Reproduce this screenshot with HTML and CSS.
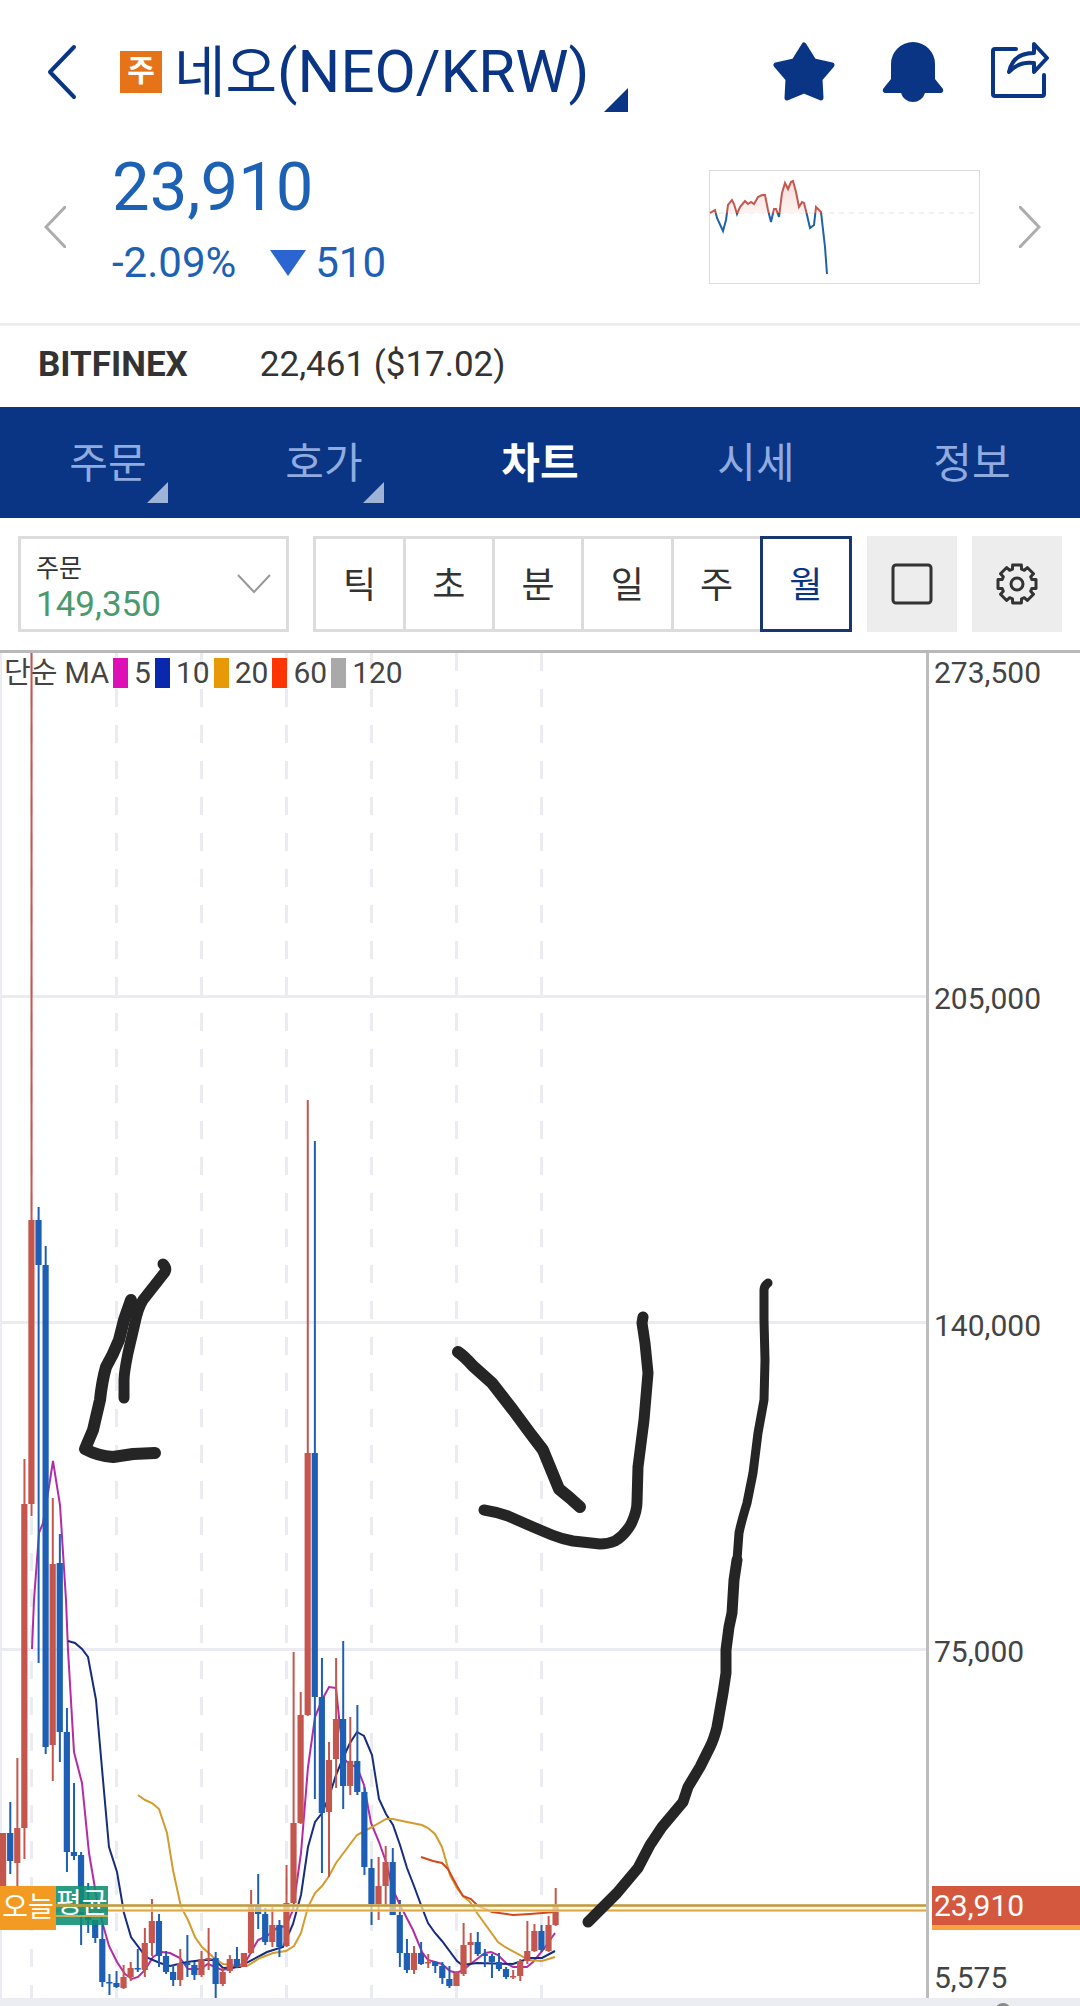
FILE: index.html
```html
<!DOCTYPE html>
<html lang="ko">
<head>
    <meta charset="UTF-8">
    <meta name="viewport" content="width=device-width, initial-scale=1.0">
    <title>네오(NEO/KRW)</title>
    <link rel="stylesheet" href="styles.css">
</head>
<body>
    <header class="header">
        <button class="icon-button" aria-label="뒤로">
            <svg width="30" height="56" viewBox="0 0 30 56"><path d="M27 3 L3 28 L27 53" fill="none" stroke="#0a3585" stroke-width="4" stroke-linecap="round" stroke-linejoin="round"/></svg>
        </button>
        <span class="badge">주</span>
        <h1 class="title"><span class="title-ko">네오</span>(NEO/KRW)</h1>
        <span class="corner corner-title"></span>
        <div class="header-icons">
            <button class="icon-button" aria-label="관심">
                <svg width="62" height="60" viewBox="0 0 62 60"><path d="M31 3 L41 19 L59 23 L47 37 L48 56 L31 49 L14 56 L15 37 L3 23 L21 19 Z" fill="#0a3585" stroke="#0a3585" stroke-width="5" stroke-linejoin="round"/></svg>
            </button>
            <button class="icon-button" aria-label="알림">
                <svg width="62" height="60" viewBox="0 0 62 60"><path d="M9 22 A22 22 0 0 1 53 22 V37 L61 47 Q62 50 59 51 H43 A12.5 12.5 0 0 1 19 51 H3 Q0 50 1 47 L9 37 Z" fill="#0a3585"/></svg>
            </button>
            <button class="icon-button" aria-label="공유">
                <svg width="58" height="60" viewBox="0 0 58 60" fill="none" stroke="#0a3585" stroke-width="4" stroke-linecap="round" stroke-linejoin="round"><path d="M25 7 H4 Q2 7 2 9 V52 Q2 54 4 54 H51 Q53 54 53 52 V33"/><path d="M43 2 L56 16 L43 30 V21 Q28 19 18 30 Q22 11 43 11 Z"/></svg>
            </button>
        </div>
    </header>

    <section class="quote">
        <button class="icon-button" aria-label="이전">
            <svg width="22" height="42" viewBox="0 0 22 42"><path d="M22 0 L2 21 L22 42" fill="none" stroke="#adadad" stroke-width="3"/></svg>
        </button>
        <div class="quote-text">
            <div class="price">23,910</div>
            <div class="change"><span>-2.09%</span><span class="down"></span><span>510</span></div>
        </div>
        <svg class="spark" width="271" height="114" viewBox="0 0 271 114">
            <defs>
                <clipPath id="above"><rect x="0" y="0" width="271" height="43"/></clipPath>
                <clipPath id="below"><rect x="0" y="43" width="271" height="71"/></clipPath>
                <linearGradient id="fade" x1="0" y1="0" x2="0" y2="1"><stop offset="0" stop-color="#f8dcd9"/><stop offset="0.5" stop-color="#fff"/></linearGradient>
            </defs>
            <rect x="0.5" y="0.5" width="270" height="113" fill="#fff" stroke="#dcdcdc"/>
            <path d="M0 43 H266" stroke="#e4e4e4" stroke-dasharray="5 5"/>
            <path id="sparkFill" clip-path="url(#above)" fill="url(#fade)"/>
            <path id="sparkUp" clip-path="url(#above)" fill="none" stroke="#c4574e" stroke-width="2"/>
            <path id="sparkDown" clip-path="url(#below)" fill="none" stroke="#1f62a8" stroke-width="2"/>
        </svg>
        <button class="icon-button" aria-label="다음">
            <svg width="22" height="42" viewBox="0 0 22 42"><path d="M0 0 L20 21 L0 42" fill="none" stroke="#adadad" stroke-width="3"/></svg>
        </button>
    </section>

    <div class="exchange">
        <strong>BITFINEX</strong>
        <span>22,461 ($17.02)</span>
    </div>

    <nav class="tabs">
        <a href="#order">주문<span class="corner corner-tab"></span></a>
        <a href="#hoga">호가<span class="corner corner-tab"></span></a>
        <a href="#chart" class="active">차트</a>
        <a href="#price">시세</a>
        <a href="#info">정보</a>
    </nav>

    <div class="toolbar">
        <div class="order-box">
            <div class="order-field">
                <label for="order">주문</label>
                <select id="order">
                    <option>149,350</option>
                </select>
            </div>
            <svg width="34" height="20" viewBox="0 0 34 20"><path d="M1 1 L17 18 L33 1" fill="none" stroke="#999" stroke-width="2"/></svg>
        </div>
        <div class="periods">
            <button>틱</button>
            <button>초</button>
            <button>분</button>
            <button>일</button>
            <button>주</button>
            <button class="active">월</button>
        </div>
        <button class="tool" aria-label="전체화면">
            <svg width="42" height="42" viewBox="0 0 42 42"><rect x="2" y="2" width="38" height="38" rx="3" fill="none" stroke="#333" stroke-width="3"/></svg>
        </button>
        <button class="tool" aria-label="설정">
            <svg width="42" height="42" viewBox="0 0 42 42" fill="none" stroke="#333" stroke-width="3" stroke-linejoin="round"><path id="gear"/><circle cx="21" cy="21" r="6"/></svg>
        </button>
    </div>

    <main class="chart" id="chart">
        <div class="plot">
            <svg class="plot-svg" viewBox="0 0 926 1345">
                <g id="grid"></g>
                <g id="averages"></g>
                <g id="candles"></g>
                <g class="ink">
                    <path stroke-width="12" d="M131 647 L124 667 L119 687 Q113 702 106 714 Q102 728 100 747 L93 777 L85 796 Q98 803 113 804 L133 801 L155 800"/>
                    <path stroke-width="11" d="M163 611 Q167 615 165 619 L143 647 Q138 655 135 670 L128 700 Q124 720 124 727 V745"/>
                    <path stroke-width="12" d="M458 699 Q464 703 473 713 L492 730 L513 757 L530 780 L543 797 L559 836 L570 845 L580 854"/>
                    <path stroke-width="11" d="M484 857 Q497 859 508 863 L533 874 L552 882 Q562 886 573 888 L600 891 Q608 891 615 888 Q622 884 627 877 Q631 872 632 869 Q637 858 637 849 L638 814 L644 767 L648 720 L645 690 L642 670 L643 664"/>
                    <path stroke-width="9" d="M768 630 Q764 633 764 637 V667 L765 707 L764 747 L758 780 L753 820 L747 850 Q741 870 739 880 L737 907 L734 927"/>
                    <path stroke-width="11" d="M737 907 L734 927 L732 960 L729 974 L726 997 V1020 L723 1040 L717 1074 Q714 1086 710 1094 L700 1114 L688 1134 L683 1149 L662 1174 L650 1192 L638 1215 L617 1240 L600 1257 L588 1269"/>
                </g>
            </svg>
            <div class="legend">
                <span class="legend-name">단순 MA</span>
                <i class="swatch ma5"></i><span>5</span>
                <i class="swatch ma10"></i><span>10</span>
                <i class="swatch ma20"></i><span>20</span>
                <i class="swatch ma60"></i><span>60</span>
                <i class="swatch ma120"></i><span>120</span>
            </div>
            <div class="tags">
                <span class="tag today">오늘</span>
                <span class="tag average">평균</span>
            </div>
        </div>
        <div class="axis">
            <span>273,500</span>
            <span>205,000</span>
            <span>140,000</span>
            <span>75,000</span>
            <span>5,575</span>
            <span class="last">23,910</span>
        </div>
    </main>
    <div class="scrollbar"><span class="thumb"></span></div>

    <script>
        // r = 상승, b = 하락 : [색, 고가, 몸통 위, 몸통 아래, 저가]
        const candles = [
            ['r', 1180, 1180, 1240, 1240], ['b', 1149, 1180, 1208, 1221], ['r', 1105, 1175, 1210, 1237], ['r', 806, 851, 1175, 1206],
            ['r', 0, 567, 851, 863], ['b', 554, 567, 612, 1010], ['b', 593, 612, 1094, 1101], ['r', 845, 911, 1092, 1128],
            ['b', 881, 910, 1079, 1109], ['b', 1055, 1079, 1199, 1219], ['b', 1130, 1199, 1203, 1207], ['b', 1199, 1202, 1264, 1292],
            ['b', 1230, 1249, 1267, 1280], ['b', 1267, 1267, 1285, 1290], ['b', 1272, 1286, 1329, 1334], ['b', 1321, 1329, 1330, 1342],
            ['b', 1318, 1330, 1334, 1335], ['r', 1312, 1324, 1335, 1336], ['r', 1309, 1315, 1324, 1328], ['b', 1296, 1315, 1316, 1319],
            ['r', 1275, 1290, 1317, 1324], ['r', 1246, 1268, 1290, 1303], ['b', 1261, 1268, 1303, 1314], ['b', 1298, 1303, 1319, 1321],
            ['b', 1312, 1319, 1327, 1333], ['r', 1296, 1310, 1327, 1333], ['b', 1282, 1310, 1312, 1324], ['b', 1309, 1312, 1322, 1327],
            ['r', 1298, 1306, 1322, 1324], ['r', 1275, 1305, 1307, 1317], ['b', 1299, 1305, 1331, 1345], ['r', 1315, 1319, 1331, 1333],
            ['r', 1302, 1306, 1318, 1320], ['b', 1294, 1306, 1313, 1315], ['r', 1300, 1300, 1314, 1314], ['r', 1237, 1253, 1300, 1301],
            ['b', 1221, 1253, 1261, 1276], ['b', 1255, 1261, 1289, 1292], ['r', 1254, 1272, 1289, 1294], ['b', 1267, 1272, 1294, 1304],
            ['r', 1212, 1250, 1293, 1294], ['r', 999, 1170, 1250, 1250], ['r', 1039, 1062, 1170, 1171], ['r', 447, 800, 1062, 1063],
            ['b', 488, 800, 1044, 1146], ['b', 1005, 1044, 1160, 1220], ['r', 1089, 1107, 1159, 1224], ['r', 1005, 1066, 1106, 1135],
            ['b', 988, 1066, 1133, 1156], ['r', 1064, 1108, 1133, 1142], ['b', 1052, 1108, 1139, 1142], ['b', 1134, 1139, 1214, 1222],
            ['b', 1206, 1215, 1251, 1272], ['r', 1204, 1233, 1251, 1267], ['r', 1193, 1209, 1233, 1254], ['b', 1195, 1209, 1262, 1262],
            ['b', 1247, 1262, 1300, 1314], ['b', 1286, 1300, 1317, 1320], ['r', 1293, 1300, 1317, 1321], ['b', 1289, 1300, 1311, 1312],
            ['r', 1301, 1309, 1310, 1315], ['b', 1308, 1309, 1313, 1320], ['b', 1309, 1313, 1325, 1331], ['b', 1313, 1326, 1333, 1335],
            ['r', 1318, 1320, 1333, 1333], ['r', 1270, 1292, 1321, 1323], ['r', 1280, 1289, 1292, 1310], ['b', 1279, 1289, 1301, 1303],
            ['b', 1296, 1301, 1303, 1314], ['b', 1301, 1303, 1309, 1325], ['b', 1300, 1309, 1316, 1318], ['b', 1314, 1316, 1324, 1326],
            ['r', 1317, 1323, 1324, 1326], ['r', 1306, 1308, 1323, 1328], ['r', 1268, 1298, 1308, 1311], ['r', 1271, 1278, 1298, 1299],
            ['b', 1272, 1278, 1297, 1299], ['r', 1263, 1272, 1298, 1299], ['r', 1235, 1252, 1272, 1273]
        ];

        // 이동평균선
        const averages = {
            '#b32ca3': '32,996 34,947 39,880 43,870 48,840 53,808 60,852 66,947 68,997 74,1099 82,1130 89,1200 97,1247 103,1272 109,1293 117,1309 125,1321 132,1326 138,1324 145,1317 153,1304 162,1299 170,1300 180,1305 188,1316 200,1316 208,1311 222,1317 233,1315 245,1310 258,1287 267,1283 277,1275 286,1273 293,1257 301,1200 308,1114 315,1064 322,1047 329,1034 336,1035 340,1074 345,1107 351,1112 357,1114 364,1132 371,1170 379,1189 386,1209 393,1237 400,1252 413,1277 422,1299 428,1307 442,1311 450,1318 457,1320 463,1317 477,1306 485,1300 491,1299 498,1302 507,1311 513,1314 527,1314 533,1309 543,1297 555,1280',
            '#162c7c': '68,988 75,990 82,996 88,1004 96,1047 103,1127 109,1194 117,1219 124,1260 131,1284 143,1300 148,1305 160,1310 170,1313 187,1309 203,1307 215,1307 223,1315 240,1314 248,1309 267,1299 283,1294 293,1271 301,1242 308,1194 315,1169 322,1160 329,1144 336,1122 343,1105 350,1090 357,1079 364,1083 372,1102 379,1146 386,1161 393,1172 400,1192 407,1215 414,1233 421,1252 428,1270 435,1280 442,1288 457,1308 462,1312 477,1310 513,1311 530,1305 542,1305 555,1298',
            '#d39c2c': '138,1142 145,1147 152,1150 159,1156 167,1180 173,1217 181,1254 188,1267 195,1284 202,1294 213,1304 223,1311 233,1312 247,1313 260,1305 273,1300 286,1298 294,1293 301,1280 308,1254 315,1240 322,1233 329,1223 336,1210 357,1182 372,1174 386,1166 393,1166 407,1169 422,1172 428,1175 435,1181 442,1194 450,1222 457,1235 463,1243 470,1249 477,1260 485,1271 498,1289 505,1294 520,1302 528,1307 542,1308 555,1304',
            '#d04a1e': '421,1204 433,1208 442,1210 448,1216 457,1233 463,1243 471,1246 478,1253 492,1259 513,1262 530,1261 555,1259'
        };

        const spark = '1,43 6,40 8,48 14,61 17,50 19,35 23,30 25,34 28,44 31,37 36,31 39,34 42,32 45,34 49,27 53,25 56,25 59,40 62,52 65,39 67,39 70,47 73,23 76,13 79,19 82,12 84,11 87,22 90,37 93,32 95,33 98,45 101,58 105,55 107,37 112,42 116,77 118,104';

        function drawGrid() {
            let out = '<path d="M1 0 V1345" stroke="#ebecf1" stroke-width="2"/>';
            for (const y of [343, 669, 996]) {
                out += `<path d="M0 ${y + 0.5} H926" stroke="#ebecf1" stroke-width="3"/>`;
            }
            for (let x = 31.5; x < 600; x += 85) {
                out += `<path d="M${x} 0 V1345" stroke="#ebecf1" stroke-width="3" stroke-dasharray="18 18"/>`;
            }
            document.getElementById('grid').innerHTML = out;
        }

        function drawCandles() {
            let out = '';
            candles.forEach(([type, high, top, bottom, low], i) => {
                const x = 3.2 + i * 85 / 12;
                const color = type === 'r' ? '#c5564d' : '#1d5fb4';
                out += `<path d="M${x} ${high} V${low}" stroke="${color}" stroke-width="2"/>`;
                out += `<rect x="${x - 3.2}" y="${top}" width="6.2" height="${Math.max(bottom - top, 1.5)}" fill="${color}"/>`;
            });
            // 현재가, 평균 단가
            out += '<rect x="56" y="1251" width="870" height="8" fill="#fff3c4" opacity="0.7"/>';
            out += '<path d="M56 1252.5 H926" stroke="#bd9a45" stroke-width="2.5"/>';
            out += '<path d="M56 1257.5 H926" stroke="#d9a648" stroke-width="2"/>';
            document.getElementById('candles').innerHTML = out;
        }

        function drawAverages() {
            let out = '';
            for (const color in averages) {
                out += `<polyline points="${averages[color]}" fill="none" stroke="${color}" stroke-width="2"/>`;
            }
            document.getElementById('averages').innerHTML = out;
        }

        function drawGear() {
            const points = [];
            for (let i = 0; i < 8; i++) {
                for (const [offset, r] of [[-17, 15.5], [-13, 19.5], [13, 19.5], [17, 15.5]]) {
                    const a = (i * 45 + offset) * Math.PI / 180;
                    points.push((21 + r * Math.sin(a)).toFixed(1) + ' ' + (21 - r * Math.cos(a)).toFixed(1));
                }
            }
            document.getElementById('gear').setAttribute('d', 'M' + points.join(' L') + ' Z');
        }

        function drawSpark() {
            const line = 'M' + spark.split(' ').join(' L');
            document.getElementById('sparkUp').setAttribute('d', line);
            document.getElementById('sparkDown').setAttribute('d', line);
            document.getElementById('sparkFill').setAttribute('d', line + ' L118,43 L1,43 Z');
        }

        drawGrid();
        drawAverages();
        drawCandles();
        drawGear();
        drawSpark();
    </script>
</body>
</html>
```

FILE: styles.css
```css
* {
    box-sizing: border-box;
}
body {
    margin: 0;
    font-family: Roboto, 'Noto Sans CJK KR', sans-serif;
    background-color: #fff;
    color: #333;
}
button {
    font-family: inherit;
    padding: 0;
    border: none;
    background: none;
    cursor: pointer;
}
svg {
    display: block;
}
.header {
    display: flex;
    align-items: center;
    height: 132px;
    padding: 12px 31px 0 47px;
    color: #0a3585;
}
.badge {
    width: 42px;
    height: 42px;
    margin: 0 12px 0 43px;
    background-color: #e67317;
    color: #fff;
    font-size: 30px;
    font-weight: 700;
    line-height: 40px;
    text-align: center;
}
.title {
    margin: 0;
    font-size: 60px;
    font-weight: 400;
    line-height: 80px;
    white-space: nowrap;
}
.title-ko {
    font-size: 56px;
}
.corner {
    border-style: solid;
    border-color: transparent;
}
.corner-title {
    align-self: flex-end;
    margin: 0 0 20px 15px;
    border-width: 0 0 24px 24px;
    border-bottom-color: #0a3585;
}
.header-icons {
    display: flex;
    gap: 47px;
    margin-left: auto;
}
.quote {
    display: flex;
    align-items: center;
    height: 194px;
    padding: 0 39px 2px 44px;
    border-bottom: 3px solid #ededed;
    color: #1d61b5;
}
.quote-text {
    margin: 0 auto 0 46px;
}
.price {
    font-size: 67px;
    line-height: 72px;
}
.change {
    display: flex;
    align-items: center;
    font-size: 42px;
    line-height: 80px;
}
.down {
    margin: 0 9px 0 34px;
    border: 18px solid transparent;
    border-top: 26px solid #2b65cf;
    border-bottom: none;
}
.spark {
    margin-right: 39px;
}
.exchange {
    display: flex;
    align-items: center;
    gap: 72px;
    height: 81px;
    padding: 0 38px 4px;
    font-size: 35px;
}
.tabs {
    display: grid;
    grid-template-columns: repeat(5, 1fr);
    background-color: #0a3585;
}
.tabs a {
    position: relative;
    height: 111px;
    color: #8fabdf;
    font-size: 42px;
    line-height: 114px;
    text-align: center;
    text-decoration: none;
}
.tabs .active {
    color: #fff;
    font-weight: 700;
}
.corner-tab {
    position: absolute;
    right: 48px;
    bottom: 15px;
    border-width: 0 0 21px 21px;
    border-bottom-color: #9fb3d6;
}
.toolbar {
    display: flex;
    gap: 15px;
    height: 132px;
    padding: 18px;
}
.order-box {
    display: flex;
    align-items: center;
    width: 26%;
    margin-right: 9px;
    padding: 0 15px;
    border: 3px solid #dcdcdc;
}
.order-field {
    display: flex;
    flex-direction: column;
    flex: 1;
    padding-top: 12px;
}
.order-field label {
    font-size: 25px;
    line-height: 30px;
}
.order-field select {
    appearance: none;
    padding: 0;
    border: none;
    background: none;
    color: #4a9a6e;
    font-family: inherit;
    font-size: 35px;
    line-height: 42px;
}
.periods {
    display: flex;
    flex: 1;
}
.periods button {
    flex: 1;
    margin-right: -3px;
    padding-bottom: 4px;
    border: 3px solid #dcdcdc;
    color: #333;
    font-size: 36px;
}
.periods .active {
    position: relative;
    margin-right: 0;
    border-color: #17376f;
    color: #0a3585;
}
.tool {
    display: flex;
    align-items: center;
    justify-content: center;
    width: 90px;
    background-color: #ededed;
}
.chart {
    display: grid;
    grid-template-columns: 1fr 154px;
    border-top: 3px solid #b9b9b9;
}
.plot {
    position: relative;
}
.plot-svg {
    width: 100%;
    height: auto;
}
.ink {
    fill: none;
    stroke: #252525;
    stroke-linecap: round;
    stroke-linejoin: round;
}
.legend {
    position: absolute;
    top: 0;
    left: 4px;
    display: flex;
    align-items: center;
    color: #444;
    font-size: 30px;
    line-height: 40px;
    white-space: nowrap;
}
.legend-name {
    font-size: 29px;
}
.swatch {
    width: 15px;
    height: 30px;
    margin: 0 6px 0 4px;
}
.ma5 {
    background-color: #dc10b4;
}
.ma10 {
    background-color: #0a28ad;
}
.ma20 {
    background-color: #e79a06;
}
.ma60 {
    background-color: #fc3503;
}
.ma120 {
    background-color: #a9a9a9;
}
.tags {
    position: absolute;
    top: 91.7%;
    left: 0;
    display: flex;
    align-items: flex-start;
    color: #fff;
    font-size: 28px;
}
.today {
    width: 56px;
    background-color: #f39a23;
    line-height: 44px;
    text-align: center;
}
.average {
    position: relative;
    width: 52px;
    height: 39px;
    background-color: rgba(14, 142, 115, 0.88);
    line-height: 36px;
}
/* 가격선이 라벨 위로 지나간다 */
.average::after {
    content: "";
    position: absolute;
    top: 18px;
    left: 0;
    width: 100%;
    height: 8px;
    border-top: 3px solid #a8a048;
    border-bottom: 2px solid #c8b050;
}
.axis {
    position: relative;
    display: flex;
    flex-direction: column;
    justify-content: space-between;
    padding-left: 5px;
    border-left: 3px solid #bdbdbd;
    color: #444;
    font-size: 30px;
    line-height: 40px;
}
.last {
    position: absolute;
    top: 91.7%;
    left: 3px;
    right: 0;
    padding-left: 2px;
    border-bottom: 5px solid #f9a03f;
    background-color: #d4583d;
    color: #fff;
    line-height: 39px;
}
.scrollbar {
    position: relative;
    height: 8px;
    overflow: hidden;
    background-color: #ecedf2;
}
.thumb {
    position: absolute;
    top: 5px;
    right: 69px;
    width: 16px;
    height: 16px;
    border-radius: 50%;
    background-color: #8a8a8a;
}
```
